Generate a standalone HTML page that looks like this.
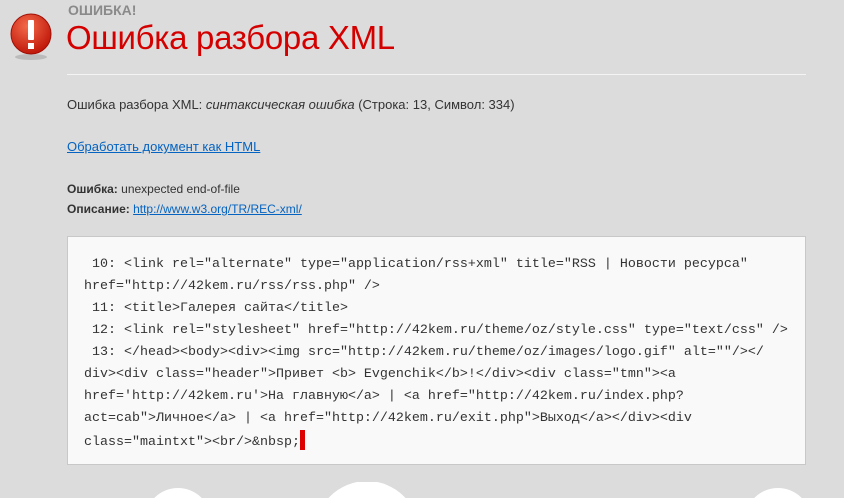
<!DOCTYPE html>
<html style="height:498px;overflow:hidden"><head><meta charset="utf-8"><style>
html,body{margin:0;padding:0}
body{width:844px;height:498px;background:#dcdcdc;font-family:"Liberation Sans",sans-serif;overflow:hidden;position:relative}
.a{position:absolute}
.code{left:67px;top:236px;width:737px;height:227px;background:#f9f9f9;border:1px solid #c8c8c8;}
.code pre{margin:0;position:absolute;left:16px;top:17px;font-family:"Liberation Mono",monospace;font-size:13.33px;line-height:22px;color:#333}
a{color:#0563c1}
</style></head><body>
<svg class="a" style="left:9px;top:12px" width="46" height="50">
<defs><radialGradient id="g" cx="40%" cy="30%" r="70%"><stop offset="0" stop-color="#f36a4a"/><stop offset="1" stop-color="#c0180a"/></radialGradient></defs>
<ellipse cx="22" cy="45" rx="16" ry="3" fill="#bbb"/>
<circle cx="22" cy="22" r="20" fill="url(#g)" stroke="#a01006" stroke-width="1"/>
<rect x="19" y="8" width="6" height="20" rx="1" fill="#fff"/>
<rect x="19" y="31" width="6" height="6" fill="#fff"/>
</svg>
<div class="a" style="left:68px;top:2px;font-size:14px;font-weight:bold;color:#8a8a8a">ОШИБКА!</div>
<div class="a" style="left:66px;top:19px;font-size:33px;color:#d40000;letter-spacing:-0.3px">Ошибка разбора XML</div>
<div class="a" style="left:67px;top:74px;width:739px;height:1px;background:#f4f4f4"></div>
<div class="a" style="left:67px;top:97px;font-size:13px;color:#333">Ошибка разбора XML: <i>синтаксическая ошибка</i> (Строка: 13, Символ: 334)</div>
<div class="a" style="left:67px;top:139px;font-size:13px"><a href="#">Обработать документ как HTML</a></div>
<div class="a" style="left:67px;top:179px;font-size:12px;color:#333;line-height:20px"><b>Ошибка:</b> unexpected end-of-file<br><b>Описание:</b> <a href="#">http://www.w3.org/TR/REC-xml/</a></div>
<div class="a code"><pre> 10: &lt;link rel="alternate" type="application/rss+xml" title="RSS | Новости ресурса"
href="http://42kem.ru/rss/rss.php" /&gt;
 11: &lt;title&gt;Галерея сайта&lt;/title&gt;
 12: &lt;link rel="stylesheet" href="http://42kem.ru/theme/oz/style.css" type="text/css" /&gt;
 13: &lt;/head&gt;&lt;body&gt;&lt;div&gt;&lt;img src="http://42kem.ru/theme/oz/images/logo.gif" alt=""/&gt;&lt;/
div&gt;&lt;div class="header"&gt;Привет &lt;b&gt; Evgenchik&lt;/b&gt;!&lt;/div&gt;&lt;div class="tmn"&gt;&lt;a
href='http://42kem.ru'&gt;На главную&lt;/a&gt; | &lt;a href="http://42kem.ru/index.php?
act=cab"&gt;Личное&lt;/a&gt; | &lt;a href="http://42kem.ru/exit.php"&gt;Выход&lt;/a&gt;&lt;/div&gt;&lt;div
class="maintxt"&gt;&lt;br/&gt;&amp;nbsp;<span style="display:inline-block;width:5px;height:20px;background:#d00;vertical-align:-5px"></span></pre></div>
<svg class="a" style="left:0;top:482px;display:block" width="844" height="16">
<circle cx="178" cy="39" r="33" fill="#fff"/>
<circle cx="367" cy="51" r="52" fill="#fff"/>
<circle cx="778" cy="39" r="33" fill="#fff"/>
</svg>
</body></html>
